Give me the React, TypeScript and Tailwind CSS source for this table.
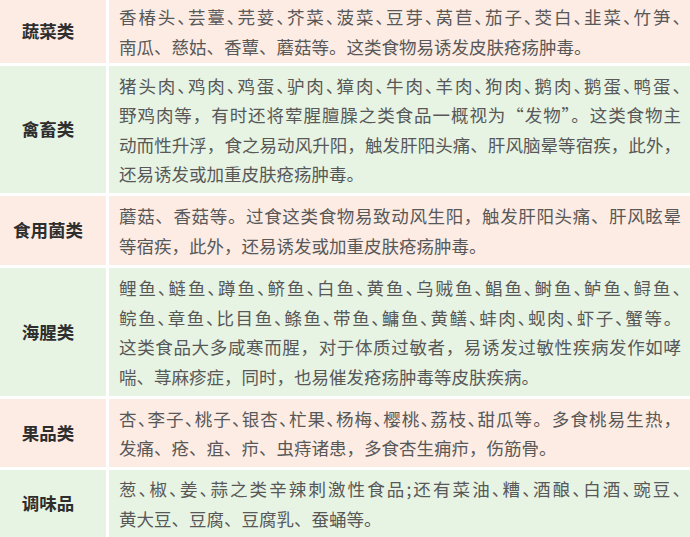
const PINK = "bg-[#fdece4]";
const GREEN = "bg-[#e7f4e4]";

type Row = {
  label: string;
  tone: "pink" | "green";
  height: string;
  // lines flagged dense get half-width 、 so they fit before justifying
  lines: { text: string; dense?: boolean }[];
};

const ROWS: Row[] = [
  {
    label: "蔬菜类",
    tone: "pink",
    height: "h-[63px]",
    lines: [
      { text: "香椿头、芸薹、芫荽、芥菜、菠菜、豆芽、莴苣、茄子、茭白、韭菜、竹笋、", dense: true },
      { text: "南瓜、慈姑、香蕈、蘑菇等。这类食物易诱发皮肤疮疡肿毒。" },
    ],
  },
  {
    label: "禽畜类",
    tone: "green",
    height: "h-[127px]",
    lines: [
      { text: "猪头肉、鸡肉、鸡蛋、驴肉、獐肉、牛肉、羊肉、狗肉、鹅肉、鹅蛋、鸭蛋、", dense: true },
      { text: "野鸡肉等，有时还将荤腥膻臊之类食品一概视为“发物”。这类食物主" },
      { text: "动而性升浮，食之易动风升阳，触发肝阳头痛、肝风脑晕等宿疾，此外，" },
      { text: "还易诱发或加重皮肤疮疡肿毒。" },
    ],
  },
  {
    label: "食用菌类",
    tone: "pink",
    height: "h-[69px]",
    lines: [
      { text: "蘑菇、香菇等。过食这类食物易致动风生阳，触发肝阳头痛、肝风眩晕" },
      { text: "等宿疾，此外，还易诱发或加重皮肤疮疡肿毒。" },
    ],
  },
  {
    label: "海腥类",
    tone: "green",
    height: "h-[128px]",
    lines: [
      { text: "鲤鱼、鲢鱼、蹲鱼、鲚鱼、白鱼、黄鱼、乌贼鱼、鲳鱼、鲥鱼、鲈鱼、鲟鱼、", dense: true },
      { text: "鲩鱼、章鱼、比目鱼、鲦鱼、带鱼、鳙鱼、黄鳝、蚌肉、蚬肉、虾子、蟹等。", dense: true },
      { text: "这类食品大多咸寒而腥，对于体质过敏者，易诱发过敏性疾病发作如哮" },
      { text: "喘、荨麻疹症，同时，也易催发疮疡肿毒等皮肤疾病。" },
    ],
  },
  {
    label: "果品类",
    tone: "pink",
    height: "h-[68px]",
    lines: [
      { text: "杏、李子、桃子、银杏、杧果、杨梅、樱桃、荔枝、甜瓜等。多食桃易生热，", dense: true },
      { text: "发痛、疮、疽、疖、虫痔诸患，多食杏生痈疖，伤筋骨。" },
    ],
  },
  {
    label: "调味品",
    tone: "green",
    height: "h-[67px]",
    lines: [
      { text: "葱、椒、姜、蒜之类辛辣刺激性食品;还有菜油、糟、酒酿、白酒、豌豆、", dense: true },
      { text: "黄大豆、豆腐、豆腐乳、蚕蛹等。" },
    ],
  },
];

function Line({ text, dense, last }: { text: string; dense?: boolean; last: boolean }) {
  const parts = dense ? text.split("、") : [text];
  return (
    <div className={last ? "" : "text-justify [text-align-last:justify]"}>
      {parts.map((p, i) => (
        <span key={i}>
          {p}
          {dense && i < parts.length - 1 && (
            <span className="[font-feature-settings:'halt']">、</span>
          )}
        </span>
      ))}
    </div>
  );
}

export default function App() {
  return (
    <div className="w-[690px] h-[537px] overflow-hidden bg-white flex flex-col gap-[3px] font-['Noto_Sans_CJK_SC',sans-serif]">
      {ROWS.map((row) => {
        const bg = row.tone === "pink" ? PINK : GREEN;
        return (
          <div key={row.label} className={`flex gap-[3px] shrink-0 ${row.height}`}>
            <div
              className={`w-[106px] shrink-0 flex items-center justify-center pr-[10px] text-[17.5px] font-bold text-[#2e2e2e] ${bg}`}
            >
              {row.label}
            </div>
            <div
              className={`flex-1 flex flex-col justify-center pl-[10px] pr-[9px] text-[17.5px] leading-[29.5px] text-[#585858] ${bg}`}
            >
              {row.lines.map((l, i) => (
                <Line key={i} text={l.text} dense={l.dense} last={i === row.lines.length - 1} />
              ))}
            </div>
          </div>
        );
      })}
    </div>
  );
}
